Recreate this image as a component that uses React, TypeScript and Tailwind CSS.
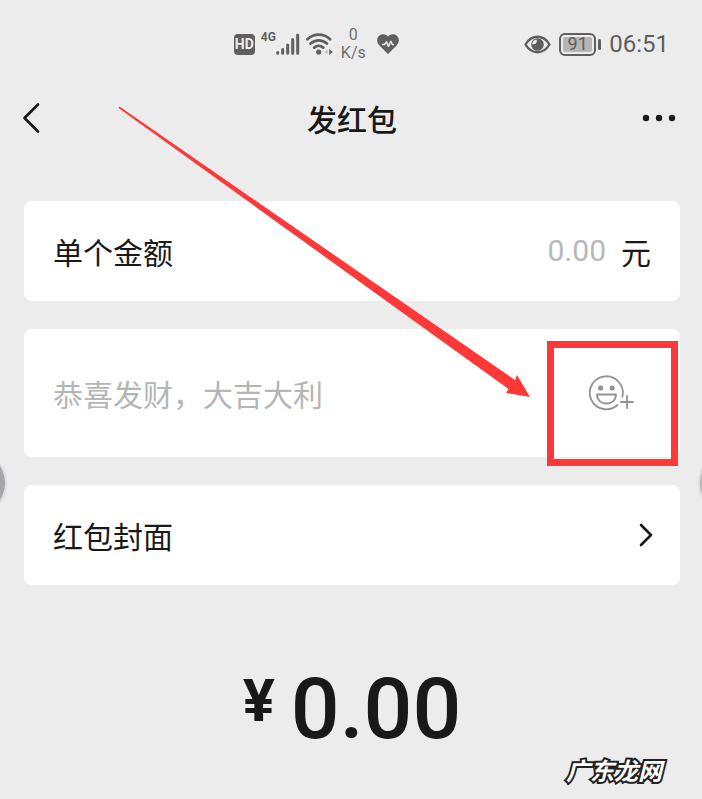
import React, { useState } from 'react';

const StatusBar: React.FC = () => (
  <div className="flex h-[88px] items-center justify-between pl-[33.3%] pr-[33px] text-[#5f5f5f]">
    <div className="flex items-center">
      <span className="flex h-[21px] w-[21px] items-center justify-center rounded bg-[#5f5f5f] text-sm font-bold leading-none text-[#ececec]">
        HD
      </span>
      <span className="ml-[6px] self-start text-xs font-bold leading-[22px]">4G</span>
      {/* Signal */}
      <svg className="h-[22px] w-[24px]" viewBox="0 0 24 22" stroke="currentColor" strokeWidth="3" strokeLinecap="round">
        <path d="M1.7 19.6v.6M6.7 16.5v3.7M11.7 12v8.2M16.7 6.5v13.7M21.7 2v18.2" />
      </svg>
      {/* Wifi */}
      <svg className="ml-[6px] h-[22px] w-[27px]" viewBox="0 0 27 22" fill="none" stroke="currentColor" strokeWidth="2.8" strokeLinecap="round">
        <path d="M1.5 6.2C8 .1 17.5.1 24 6.2" />
        <path d="M4.6 10.5c4.7-4.3 11.6-4.3 16.3 0" />
        <path d="M8.2 14.6c2.6-2.4 6.5-2.4 9.1 0" />
        <circle cx="12.7" cy="19" r="2.6" fill="currentColor" stroke="none" />
        <path d="M23.2 16l3.6 3-3.6 3z" fill="currentColor" stroke="none" />
        <path d="M21.5 16.5l-2.8 2.5 2.8 2.5z" fill="#b9b9b9" stroke="none" />
      </svg>
      <span className="ml-2 flex flex-col items-center text-base leading-[18px] text-[#707070]">
        <span>0</span>
        <span>K/s</span>
      </span>
      {/* Health */}
      <svg className="ml-[11px] h-[20px] w-[22px]" viewBox="0 0 22 20">
        <path d="M11 20L2.2 11.3C-.5 8.5-.4 4.3 1.9 2 4.5-.6 8.7-.4 11 2.6c2.3-3 6.5-3.2 9.1-.6 2.3 2.3 2.4 6.5-.3 9.3z" fill="currentColor" />
        <path d="M5 10.5h2.5l2-2.6 2 4.6 2.3-5.2 1.5 3.2H17" fill="none" stroke="#ececec" strokeWidth="1.5" strokeLinejoin="round" />
      </svg>
    </div>
    <div className="flex items-center">
      {/* Eye comfort */}
      <svg className="h-[19px] w-[27px]" viewBox="0 0 27 19">
        <path d="M1.5 9.5C4.5 4.5 8.5 1.8 13.5 1.8s9 2.7 12 7.7c-3 5-7 7.7-12 7.7s-9-2.7-12-7.7z" fill="none" stroke="currentColor" strokeWidth="2.4" strokeLinejoin="round" />
        <circle cx="13.5" cy="9.5" r="6.3" fill="currentColor" />
        <path d="M12.5 4.500c1.200 2.600-.8 5.300-4.300 4.700.2-2.600 1.800-4.500 4.300-4.700z" fill="#ececec" />
      </svg>
      <span className="ml-2 flex h-[23px] w-[37px] items-center rounded-md border-2 border-current p-[2px]">
        <span className="flex h-full w-full items-center justify-center rounded-xs bg-[#b5b5b5] text-lg leading-none">91</span>
      </span>
      <span className="ml-[2px] h-[11px] w-[3px] rounded-xs bg-current" />
      <time className="ml-2 text-2xl leading-7">06:51</time>
    </div>
  </div>
);

const App: React.FC = () => {
  const [amount, setAmount] = useState('');
  const [message, setMessage] = useState('');

  return (
    <div className="relative min-h-screen overflow-hidden bg-[#ececec] pb-10 font-['Roboto','Noto_Sans_CJK_SC',sans-serif] text-[#191919]">
      <StatusBar />

      <header className="flex h-[60px] items-center justify-between pl-[22px] pr-[26px]">
        <button type="button" aria-label="返回" className="flex w-[40px]">
          <svg className="h-[32px] w-[18px]" viewBox="0 0 18 32" fill="none" stroke="currentColor" strokeWidth="2.6" strokeLinecap="round" strokeLinejoin="round">
            <path d="M16 2.5L2.5 16 16 29.5" />
          </svg>
        </button>
        <h1 className="font-['Noto_Sans_CJK_SC',sans-serif] text-[30px] font-medium leading-9">发红包</h1>
        <button type="button" aria-label="更多">
          <svg className="h-[8px] w-[34px]" viewBox="0 0 34 8" fill="currentColor">
            <circle cx="4" cy="4" r="3.2" />
            <circle cx="17" cy="4" r="3.2" />
            <circle cx="30" cy="4" r="3.2" />
          </svg>
        </button>
      </header>

      <main className="flex flex-col gap-7 pl-6 pr-[22px] pt-[53px] font-['Noto_Sans_CJK_SC',sans-serif] text-[30px] leading-10">
        <label className="flex h-[100px] items-center rounded-lg bg-white px-[29px]">
          <span className="shrink-0">单个金额</span>
          <input
            value={amount}
            onChange={e => setAmount(e.target.value)}
            inputMode="decimal"
            placeholder="0.00"
            className="h-10 min-w-0 flex-1 bg-transparent text-right font-['Roboto',sans-serif] outline-none placeholder:text-[#b8b8b8]"
          />
          <span className="ml-[15px] shrink-0">元</span>
        </label>

        <div className="relative flex h-[128px] items-center rounded-lg bg-white pl-[29px] pr-[45px]">
          <input
            value={message}
            onChange={e => setMessage(e.target.value)}
            aria-label="祝福语"
            placeholder="恭喜发财，大吉大利"
            className="h-11 min-w-0 flex-1 bg-transparent outline-none placeholder:text-[#b5b5b5]"
          />
          <button type="button" aria-label="添加表情">
            <svg className="h-[39px] w-[46px]" viewBox="0 0 46 39" fill="none" stroke="#929292" strokeWidth="1.8">
              <path d="M33.1 23.5A16.5 16.5 0 1 0 28.9 30.5" />
              <circle cx="11.6" cy="14" r="2.6" fill="#929292" stroke="none" />
              <circle cx="23.2" cy="14" r="2.6" fill="#929292" stroke="none" />
              <path d="M8 20.5h19c0 5.5-4.2 9-9.5 9S8 26 8 20.5z" strokeLinejoin="round" />
              <path d="M38 21.3v13.5M31.3 28h13.4" />
            </svg>
          </button>
          <span className="pointer-events-none absolute -bottom-[9px] right-[2px] top-3 w-[131px] border-[7px] border-[#fd3838]" />
        </div>

        <button type="button" className="flex h-[100px] items-center justify-between rounded-lg bg-white pl-[29px] pr-[26px]">
          <span>红包封面</span>
          <svg className="h-[24px] w-[16px]" viewBox="0 0 16 24" fill="none" stroke="currentColor" strokeWidth="2.6" strokeLinecap="round" strokeLinejoin="round">
            <path d="M3 2l10 10L3 22" />
          </svg>
        </button>

        <p className="mt-[46px] flex items-start justify-center gap-4 font-['Roboto',sans-serif]">
          <span className="text-[60px] font-bold leading-[84px]">¥</span>
          <span className="text-[86px] font-medium leading-[100px]">0.00</span>
        </p>
      </main>

      {/* Floating handles at the screen edges */}
      <span className="absolute -left-[57px] top-[452px] h-[62px] w-[62px] rounded-full bg-[#a5a6ac] ring-2 ring-[#dcdce0]" />
      <span className="absolute -right-[60px] top-[452px] h-[62px] w-[62px] rounded-full bg-[#b5b5b8] ring-2 ring-[#dcdce0]" />

      {/* Pointer to the emoji button */}
      <svg className="pointer-events-none absolute right-[172px] top-[106px] h-[292px] w-[412px]" viewBox="118 106 412 292">
        <path d="M119.5 106.5L515 380l2-5 13 22-24-4 2.5-4L118.5 108z" fill="#fd3838" />
      </svg>

      <span className="absolute bottom-[13px] right-[40px] font-['Noto_Sans_CJK_SC',sans-serif] text-2xl font-bold italic leading-8 text-white [paint-order:stroke_fill] [-webkit-text-stroke:4px_#222]">
        广东龙网
      </span>
    </div>
  );
};

export default App;
